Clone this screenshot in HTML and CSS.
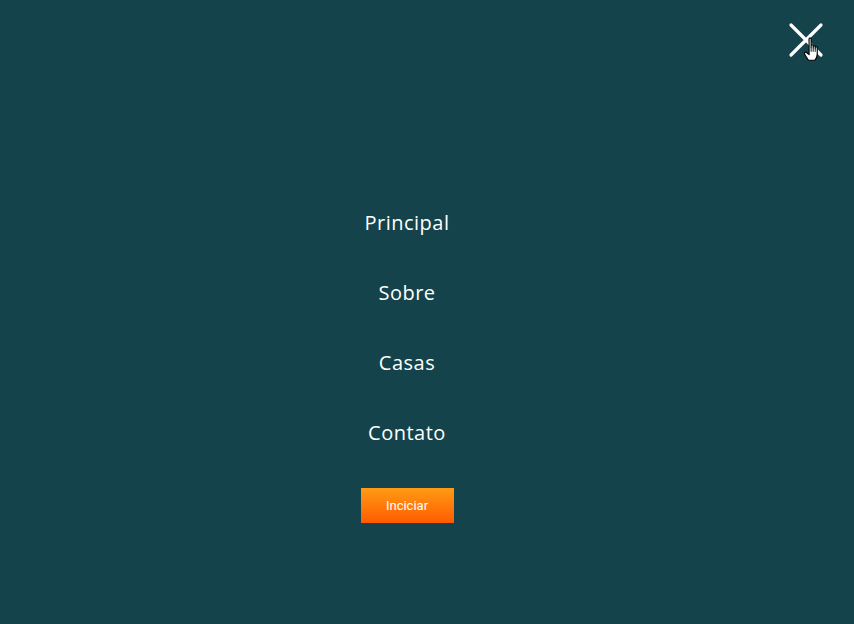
FILE: index.html
```html
<!DOCTYPE html>
<html lang="pt">
<head>
<meta charset="utf-8">
<link rel="stylesheet" href="styles.css">
</head>
<body>
<div class="overlay">
  <button class="close" aria-label="Fechar">
    <svg width="36" height="36" viewBox="0 0 36 36"><path d="M3 3 L33 33 M33 3 L3 33" stroke="#fff" stroke-width="3.2" stroke-linecap="round"/></svg>
    <svg class="cursor" width="19" height="25" viewBox="0 0 16 22"><path d="M5 1.5 C5 0.8 6.8 0.8 6.8 1.5 L6.8 9 L6.8 7.5 C6.8 6.8 8.6 6.8 8.6 7.5 L8.6 9.5 L8.6 8.3 C8.6 7.6 10.4 7.6 10.4 8.3 L10.4 10 L10.4 9.2 C10.4 8.5 12.2 8.5 12.2 9.2 L12.2 14.5 C12.2 17 11 19.5 10 20.5 L4.5 20.5 C3.5 19 2 17 1 15 C0.5 14 1.5 12.8 2.6 13.6 L5 15.5 Z" fill="#fff" stroke="#000" stroke-width="1" stroke-linejoin="round"/><path d="M6.8 9 V13 M8.6 9.5 V13 M10.4 10 V13" stroke="#000" stroke-width="0.8"/></svg>
  </button>
  <nav class="menu">
    <a class="item" href="#">Principal</a>
    <a class="item" href="#">Sobre</a>
    <a class="item" href="#">Casas</a>
    <a class="item" href="#">Contato</a>
    <a class="btn" href="#">Inciciar</a>
  </nav>
</div>
</body>
</html>
```
FILE: styles.css
```css
html, body {
  margin: 0;
  height: 100%;
}
body {
  background: #15434b;
  font-family: "Open Sans", "Noto Sans", sans-serif;
}
.overlay {
  position: relative;
  height: 624px;
  display: flex;
  justify-content: center;
}
.close {
  position: absolute;
  top: 22px;
  right: 30px;
  width: 36px;
  height: 36px;
  padding: 0;
  border: 0;
  background: transparent;
}
.close svg { display: block; }
.close .cursor {
  position: absolute;
  left: 15px;
  top: 15px;
}
.menu {
  display: flex;
  flex-direction: column;
  align-items: center;
  padding-top: 208px;
  margin-right: 40px;
}
.item {
  color: #fff;
  text-decoration: none;
  font-size: 20px;
  line-height: 30px;
  height: 70px;
  letter-spacing: 0.5px;
}
.btn {
  width: 93px;
  height: 35px;
  line-height: 35px;
  text-align: center;
  color: #fff;
  text-decoration: none;
  font-family: "Roboto", sans-serif;
  font-size: 13px;
  font-weight: 400;
  background: linear-gradient(#ff9b15, #ff5c00);
}
```
